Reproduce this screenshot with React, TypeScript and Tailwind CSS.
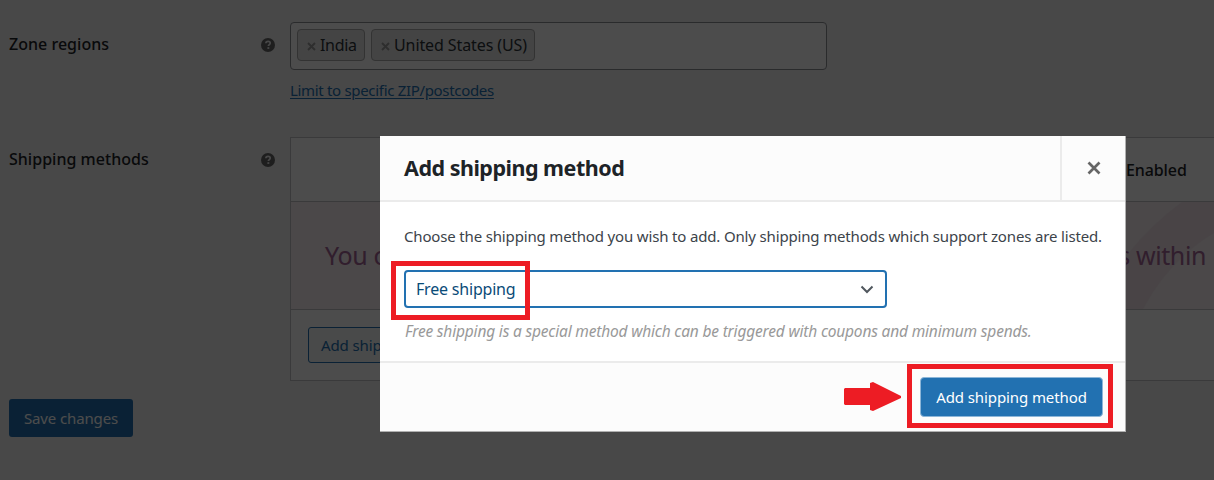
import React from 'react';

const regions = [
  { name: 'India', style: 'w-[68px] tracking-[-0.3px]' },
  { name: 'United States (US)', style: 'w-[164px] tracking-[-0.1px]' },
];

const HelpTip: React.FC = () => (
  <svg viewBox="0 0 14 14" className="h-[14px] w-[14px]">
    <circle cx="7" cy="7" r="7" fill="#666" />
    <path d="M4.9 5.3c0-1.300.900-2 2.200-2s2.100.700 2.100 1.800c0 1.500-1.800 1.500-1.800 2.900" fill="none" stroke="#f0f0f1" strokeWidth="1.700" />
    <rect x="6.400" y="9.200" width="1.900" height="1.700" fill="#f0f0f1" />
  </svg>
);

const RowLabel: React.FC<{ text: string }> = ({ text }) => (
  <div className="flex w-[290px] shrink-0 items-start justify-between pl-[9px] pr-[15px]">
    <span className="text-[16px] leading-[22px] font-medium text-[#1d2327] whitespace-nowrap tracking-[0.02px]">{text}</span>
    <span className="pt-[5px]"><HelpTip /></span>
  </div>
);

const Settings: React.FC = () => (
  <div className="h-full w-full overflow-hidden bg-[#f0f0f1]">
    {/* Zone regions */}
    <div className="flex h-[115px] pt-[22px]">
      <div className="pt-[11px]">
        <RowLabel text="Zone regions" />
      </div>
      <div>
        <div className="flex h-[48px] w-[537px] gap-[6px] rounded-[4px] border border-[#8c8f94] bg-white p-[6px]">
          {regions.map((r) => (
            <span
              key={r.name}
              className={`flex h-[32px] items-center rounded-[4px] border border-[#aaa] bg-[#e4e4e4] pl-[9px] text-[16px] text-[#2c3338] whitespace-nowrap ${r.style}`}
            >
              <svg viewBox="0 0 9 9" className="mt-[3px] mr-[4px] h-[9px] w-[9px] shrink-0">
                <path d="M1 1l7 7M8 1L1 8" stroke="#999" strokeWidth="1.800" />
              </svg>
              {r.name}
            </span>
          ))}
        </div>
        <a className="mt-[10px] block text-[15px] leading-[20px] text-[#2271b1] underline underline-offset-2 tracking-[-0.32px]">
          Limit to specific ZIP/postcodes
        </a>
      </div>
    </div>

    {/* Shipping methods */}
    <div className="flex pt-[22px]">
      <div className="pt-[11px]">
        <RowLabel text="Shipping methods" />
      </div>
      <div className="h-[244px] w-[940px] shrink-0 border border-[#c3c4c7] bg-white">
        <div className="flex h-[64px] items-center border-b border-[#c3c4c7] pl-[835px] text-[16px] font-medium text-[#1d2327]">
          <span className="tracking-[-0.1px]">Enabled</span>
        </div>
        <div className="relative flex h-[108px] items-center border-b border-[#c3c4c7] bg-[#faf0f3] pl-[34px]">
          <svg viewBox="0 0 110 107" className="absolute top-0 left-[813px] h-[107px] w-[110px]">
            <path d="M78 0Q49 21 22 54Q8 76 0 107H39Q65 58 110 31V0Z" fill="#f3e4ec" />
          </svg>
          <div className="relative text-[25px] text-[#a46497] whitespace-nowrap">
            <span className="flex w-[881px] justify-between tracking-[-0.4px]">
              <span>You can add multiple shipping methods</span>
              <span>this zone. Only customers within</span>
            </span>
          </div>
        </div>
        <div className="pt-[17px] pl-[17px]">
          <button className="h-[36px] w-[178px] rounded-[3px] border border-[#2271b1] bg-[#f6f7f7] pl-[12px] text-left text-[15px] text-[#2271b1] tracking-[-0.1px]">
            Add shipping method
          </button>
        </div>
      </div>
    </div>

    <button className="mt-[18px] ml-[9px] h-[38px] w-[124px] rounded-[3px] bg-[#2271b1] text-[15px] text-white tracking-[-0.12px]">
      Save changes
    </button>
  </div>
);

const Modal: React.FC = () => (
  <div className="absolute top-[136px] left-[380px] flex h-[296px] w-[746px] flex-col border-r border-b border-[#b0b0b0] bg-white">
    <header className="flex h-[66px] border-b-2 border-[#ebebeb] bg-[#fcfcfc]">
      <h1 className="flex-1 pt-[16px] pl-[24px] text-[21.5px] leading-[32px] font-bold text-[#1d2327] tracking-[-0.5px]">
        Add shipping method
      </h1>
      <button className="flex w-[65px] items-center justify-center border-l-2 border-[#ebebeb]">
        <svg viewBox="0 0 14 14" className="h-[14px] w-[14px]">
          <path d="M1.500 1.500l11 11M12.500 1.500l-11 11" stroke="#666" strokeWidth="2.700" />
        </svg>
      </button>
    </header>
    <div className="h-[159px] pt-[23px] pl-[24px]">
      <p className="text-[15px] leading-[22px] text-[#3c434a] whitespace-nowrap tracking-[-0.16px]">
        Choose the shipping method you wish to add. Only shipping methods which support zones are listed.
      </p>
      <div className="mt-[23px] flex h-[38px] w-[483px] items-center justify-between rounded-[4px] border-2 border-[#2271b1] bg-white pr-[11px] pl-[10px]">
        <span className="text-[16px] text-[#0a4b78] tracking-[-0.2px]">Free shipping</span>
        <svg viewBox="0 0 14 9" className="h-[9px] w-[14px]">
          <path d="M1.500 1.500L7 7l5.500-5.500" fill="none" stroke="#50575e" strokeWidth="2" />
        </svg>
      </div>
      <p className="mt-[12px] pl-px text-[15.5px] leading-[22px] text-[#999] italic whitespace-nowrap tracking-[-0.18px]">
        Free shipping is a special method which can be triggered with coupons and minimum spends.
      </p>
    </div>
    <footer className="flex flex-1 justify-end border-t-2 border-[#ebebeb] bg-[#fcfcfc] pt-[14px] pr-[22px]">
      <button className="h-[40px] w-[183px] rounded-[4px] border border-[#8db6d8] bg-[#2271b1] text-[15px] text-white whitespace-nowrap tracking-[-0.1px]">
        Add shipping method
      </button>
    </footer>
  </div>
);

export default function App() {
  return (
    <div className="relative h-[480px] w-[1214px] overflow-hidden font-['Noto_Sans','Open_Sans',sans-serif]">
      <Settings />
      <div className="absolute inset-0 bg-black/70" />
      <Modal />

      {/* Callouts */}
      <div className="absolute top-[261px] left-[391px] h-[59px] w-[139px] border-[5px] border-[#ed1c24]" />
      <div className="absolute top-[364px] left-[907px] h-[64px] w-[206px] border-[5px] border-[#ed1c24]" />
      <svg viewBox="0 0 58 30" className="absolute top-[382px] left-[844px] h-[30px] w-[58px]">
        <path d="M1 6H26V1L29 0L57 14V16L29 29L26 28V23H1L0 22V7Z" fill="#ed1c24" />
      </svg>
    </div>
  );
}
